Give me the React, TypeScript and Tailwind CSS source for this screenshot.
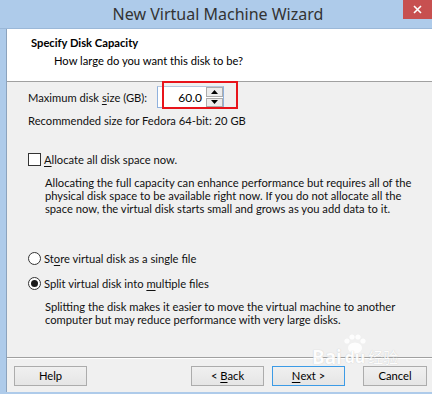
import React from "react";

const Key: React.FC<{ children: React.ReactNode }> = ({ children }) => (
  <span className="underline underline-offset-2 decoration-1">{children}</span>
);

const Radio: React.FC<{ checked?: boolean }> = ({ checked }) => (
  <span className="w-[13px] h-[13px] rounded-full border border-[#333] bg-white flex items-center justify-center shrink-0">
    {checked && <span className="w-[7px] h-[7px] rounded-full bg-[#1a1a1a]" />}
  </span>
);

const WizButton: React.FC<{ className?: string; focused?: boolean; children: React.ReactNode }> = ({
  className = "",
  focused,
  children,
}) => (
  <button
    className={`h-[20px] flex items-center justify-center text-black bg-gradient-to-b from-[#f0f0f0] to-[#e5e5e5] border ${
      focused ? "border-[#3c9be6]" : "border-[#acacac]"
    } ${className}`}
  >
    {children}
  </button>
);

export default function App() {
  return (
    <div className="w-[432px] h-[394px] bg-[#aecbea] flex flex-col overflow-hidden font-['Lato','Noto_Sans',sans-serif] text-[11.2px] text-[#111] relative whitespace-nowrap">
      {/* title bar */}
      <div className="h-[29px] shrink-0 grid grid-cols-[29px_1fr_29px] border-b border-[#9bb8d8]">
        <div />
        <div className="flex items-center justify-center font-['Noto_Sans',sans-serif] text-[16px] text-[#333] pb-[1px] pl-[4px]">
          New Virtual Machine Wizard
        </div>
        <div className="h-[19px] bg-[#c75050] flex items-center justify-center">
          <svg width="9" height="9" viewBox="0 0 9 9">
            <path d="M1 1L8 8M8 1L1 8" stroke="#fff" strokeWidth="1.6" />
          </svg>
        </div>
      </div>

      <div className="flex-1 flex flex-col ml-[6px] border-l border-[#8ca3bd] mb-[2px]">
        {/* header */}
        <div className="h-[53px] shrink-0 bg-white border-b border-[#a0a0a0] flex flex-col">
          <div className="pl-[24px] mt-[7px] font-bold text-[#000] leading-[14px]">Specify Disk Capacity</div>
          <div className="pl-[47px] mt-[4px] leading-[14px] text-[#000]">How large do you want this disk to be?</div>
        </div>

        {/* body */}
        <div className="h-[275px] shrink-0 bg-[#f0f0f0] pl-[21px] flex flex-col leading-[13px]">
          <div className="mt-[4px] h-[22px] flex items-center relative">
            <span className="w-[129px]">
              Maximum disk <Key>s</Key>ize (GB):
            </span>
            <div className="w-[67px] h-[22px] bg-white border border-[#8fb1dd] border-t-[#b5c7de] flex items-center">
              <span className="flex-1 text-right pr-[4px] text-[12px] text-black">60.0</span>
              <div className="w-[17px] h-full flex flex-col gap-[1px]">
                <div className="flex-1 bg-[#ececec] border border-[#acacac] flex items-center justify-center">
                  <svg width="7" height="4" viewBox="0 0 7 4">
                    <path d="M0 4L3.5 0L7 4Z" fill="#000" />
                  </svg>
                </div>
                <div className="flex-1 bg-[#ececec] border border-[#acacac] flex items-center justify-center">
                  <svg width="7" height="4" viewBox="0 0 7 4">
                    <path d="M0 0L3.5 4L7 0Z" fill="#000" />
                  </svg>
                </div>
              </div>
            </div>
            {/* red annotation */}
            <div className="absolute left-[134px] top-[-5px] w-[76px] h-[28px] border-2 border-[#e8141b]" />
          </div>

          <div className="mt-[6px]">Recommended size for Fedora 64-bit: 20 GB</div>

          <div className="mt-[25px] h-[14px] flex items-center gap-[3px]">
            <span className="w-[13px] h-[13px] bg-white border border-[#333] shrink-0" />
            <span>
              <Key>A</Key>llocate all disk space now.
            </span>
          </div>
          <div className="mt-[10px] pl-[17px]">
            <div>Allocating the full capacity can enhance performance but requires all of the</div>
            <div>physical disk space to be available right now. If you do not allocate all the</div>
            <div>space now, the virtual disk starts small and grows as you add data to it.</div>
          </div>

          <div className="mt-[36px] h-[14px] flex items-center gap-[3px]">
            <Radio />
            <span>
              St<Key>o</Key>re virtual disk as a single file
            </span>
          </div>
          <div className="mt-[11px] h-[14px] flex items-center gap-[3px]">
            <Radio checked />
            <span>
              Split virtual disk into <Key>m</Key>ultiple files
            </span>
          </div>
          <div className="mt-[10px] pl-[17px]">
            <div>Splitting the disk makes it easier to move the virtual machine to another</div>
            <div>computer but may reduce performance with very large disks.</div>
          </div>
        </div>

        {/* footer */}
        <div className="flex-1 bg-[#f0f0f0] border-t border-[#a0a0a0] flex flex-col">
          <div className="h-px bg-white" />
          <div className="mt-[7px] flex items-center">
            <WizButton className="ml-[7px] w-[73px]">Help</WizButton>
            <WizButton className="ml-[104px] w-[73px]">
              &lt;&nbsp;<Key>B</Key>ack
            </WizButton>
            <WizButton className="ml-[8px] w-[73px]" focused>
              <Key>N</Key>ext&nbsp;&gt;
            </WizButton>
            <WizButton className="ml-[18px] w-[64px]">Cancel</WizButton>
          </div>
        </div>
      </div>

      {/* watermark */}
      <div className="absolute left-[312px] top-[334px] pointer-events-none select-none flex flex-col items-start opacity-90">
        <svg width="24" height="20" viewBox="0 0 24 20" className="ml-[30px]">
          <circle cx="5" cy="7" r="2.6" fill="#fff" />
          <circle cx="10" cy="3" r="2.6" fill="#fff" />
          <circle cx="16" cy="3" r="2.6" fill="#fff" />
          <circle cx="21" cy="7" r="2.6" fill="#fff" />
          <ellipse cx="13" cy="14" rx="7" ry="5.5" fill="#fff" />
        </svg>
        <div className="flex items-end -mt-[6px] font-['Noto_Sans','Noto_Sans_CJK_SC',sans-serif] font-bold text-[19px] leading-[19px] text-white [text-shadow:0_0_1px_#bdbdbd]">
          Bai<span className="text-[16px] ml-[3px]">du</span>
          <span className="text-[15px] font-normal ml-[3px]">经验</span>
        </div>
      </div>
    </div>
  );
}
